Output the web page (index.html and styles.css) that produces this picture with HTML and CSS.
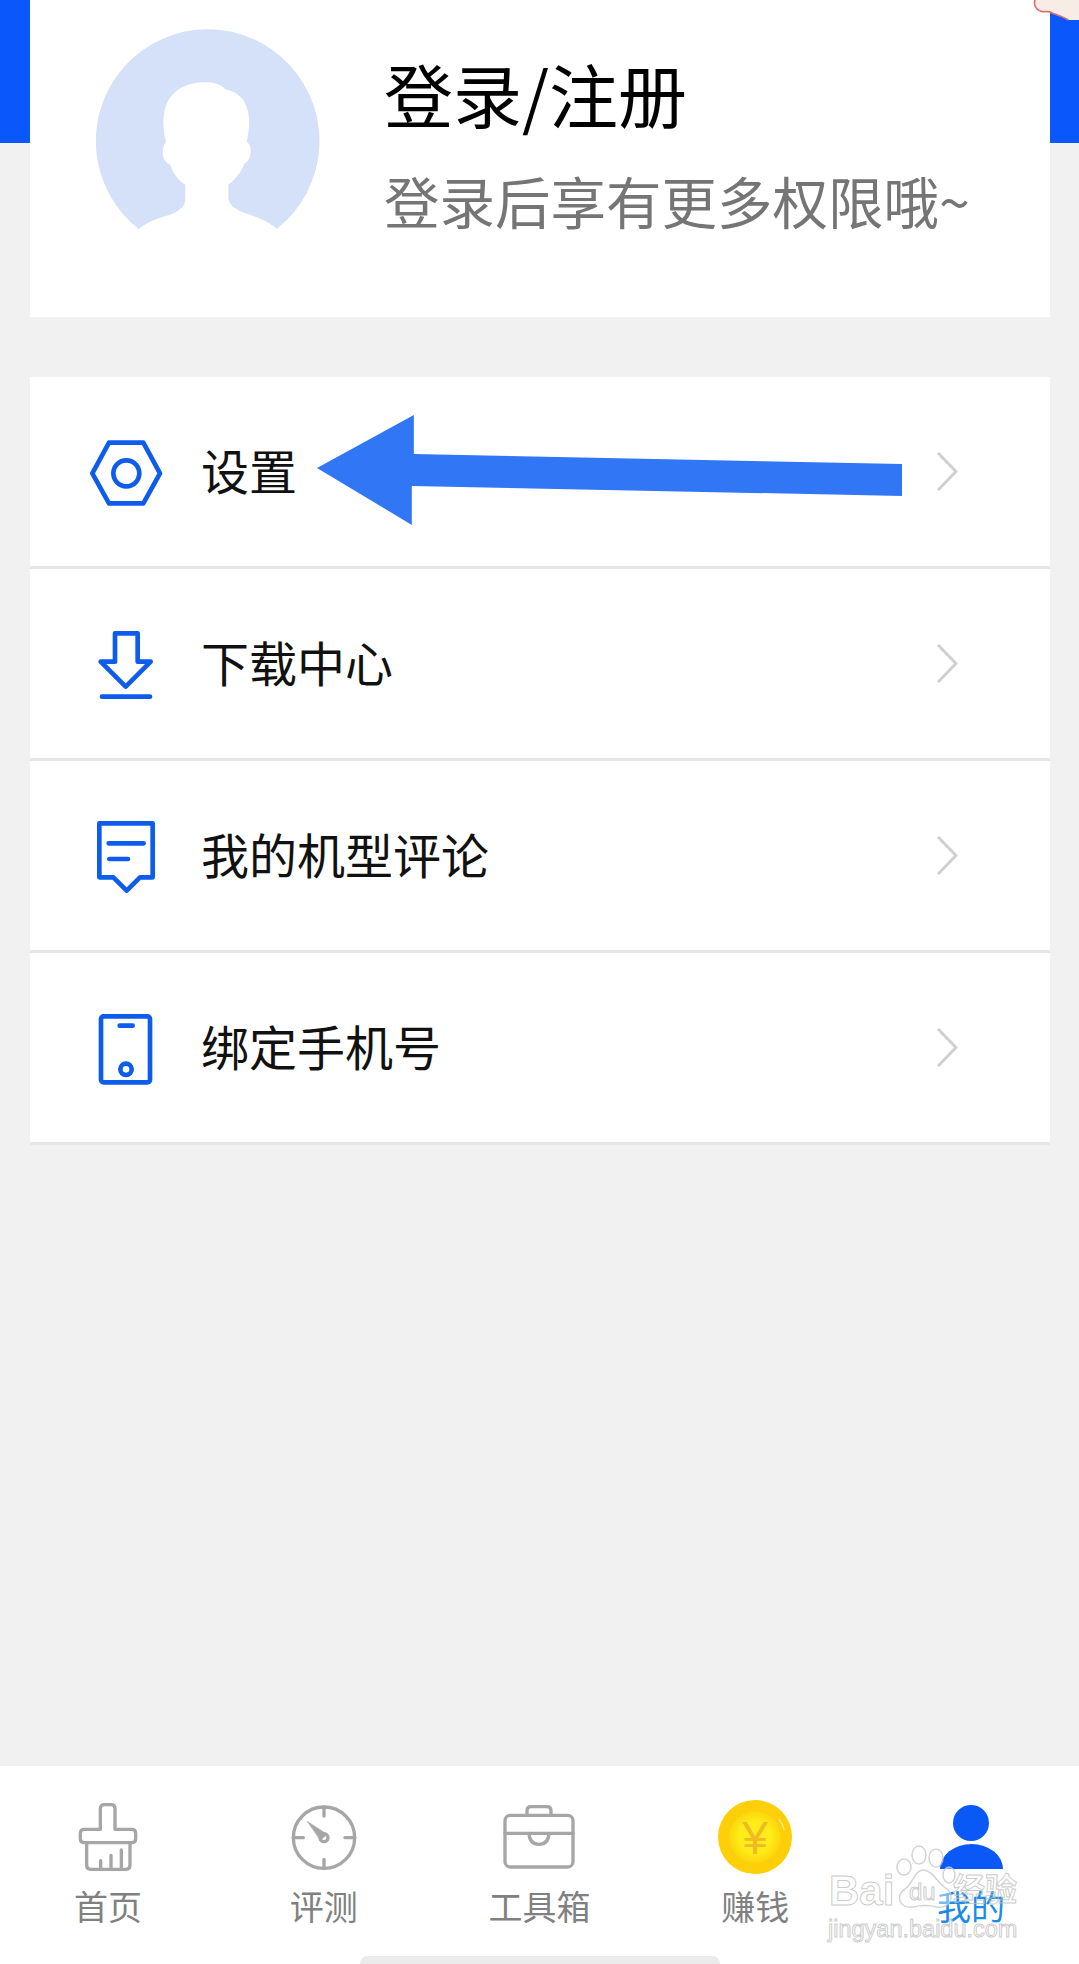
FILE: index.html
```html
<!DOCTYPE html>
<html lang="zh-CN">
<head>
  <meta charset="UTF-8" />
  <title>我的</title>
  <link rel="stylesheet" href="styles.css">
</head>
<body>

<div class="page">

  <svg class="sticker" viewBox="0 0 357 120">
    <path class="sticker-fill" d="M225 0 C220 15 228 32 250 35 C262 35 268 33 275 38 C290 45 310 50 325 60 H357 V0 Z" />
    <path class="sticker-line" d="M225 0 C220 15 228 32 250 35 C262 35 268 33 275 38 C290 45 310 50 325 60" />
  </svg>

  <div class="profile-wrap">
    <section class="profile">
      <svg class="avatar" viewBox="47 27 673 604">
        <path d="M175 628 A336 336 0 1 1 590 628 C560 600 520 590 490 578 C460 565 445 555 445 530 L445 495 C470 475 485 455 492 432 C508 425 513 405 512 390 C512 378 505 370 500 365 C510 320 510 280 495 250 C485 228 460 212 435 208 C425 192 395 187 375 187 C320 187 270 210 255 265 C245 300 250 335 257 368 C247 378 247 395 248 405 C250 420 258 430 270 435 C277 460 295 482 315 495 L315 540 C315 565 290 578 260 588 C225 598 200 608 175 628 Z" />
      </svg>
      <div class="profile-text">
        <h1>登录/注册</h1>
        <p>登录后享有更多权限哦~</p>
      </div>
    </section>
  </div>

  <main class="menu">
    <div class="row">
      <svg class="row-icon" viewBox="78 36 240 240">
        <path d="M97 160 L147 68 H250 L300 160 L250 250 H147 Z" />
        <circle cx="199" cy="160" r="39" />
      </svg>
      <span class="row-label">设置</span>
      <svg class="chevron" viewBox="0 0 21 39"><path d="M1 1 L19 19.500 L1 38" /></svg>
      <svg class="arrow" viewBox="0 0 586 110">
        <polygon points="0,53 97,0 97,39 586,49 586,81 95,71 95,110" />
      </svg>
    </div>
    <div class="row">
      <svg class="row-icon" viewBox="78 612 240 240">
        <path d="M165 640 H233 V725 H272 L197 800 L122 725 H165 Z" />
        <path d="M126 830 H270" />
      </svg>
      <span class="row-label">下载中心</span>
      <svg class="chevron" viewBox="0 0 21 39"><path d="M1 1 L19 19.500 L1 38" /></svg>
    </div>
    <div class="row">
      <svg class="row-icon" viewBox="78 78 240 240">
        <path d="M118 100 H278 V262 H240 L200 302 L160 262 H118 Z" />
        <path d="M146 160 H251 M148 207 H204" />
      </svg>
      <span class="row-label">我的机型评论</span>
      <svg class="chevron" viewBox="0 0 21 39"><path d="M1 1 L19 19.500 L1 38" /></svg>
    </div>
    <div class="row">
      <svg class="row-icon" viewBox="78 654 240 240">
        <rect x="123" y="679" width="147" height="198" rx="8" />
        <path d="M179 707 H218" />
        <circle cx="198" cy="838" r="17" />
      </svg>
      <span class="row-label">绑定手机号</span>
      <svg class="chevron" viewBox="0 0 21 39"><path d="M1 1 L19 19.500 L1 38" /></svg>
    </div>
  </main>

  <nav class="tabbar">
    <div class="tabs">
      <div class="tab">
        <svg class="tab-icon" viewBox="24 21 240 240">
          <path d="M121 118 V56 Q121 44 133 44 H153 Q165 44 165 56 V118 H215 Q227 118 227 130 V146 Q227 158 215 158 H73 Q61 158 61 146 V130 Q61 118 73 118 Z" />
          <path d="M80 158 V226 Q80 238 92 238 H198 Q210 238 210 226 V158" />
          <path d="M122 212 V238 M153 196 V238 M184 180 V238" />
        </svg>
        <span class="tab-label">首页</span>
      </div>
      <div class="tab">
        <svg class="tab-icon" viewBox="672 21 240 240">
          <circle cx="792" cy="143" r="92" />
          <path d="M792 51 V78 M792 208 V235 M700 143 H730 M855 143 H884" />
          <circle cx="792" cy="143" r="12" />
          <polygon class="needle" points="743,95 801,133 782,151" />
        </svg>
        <span class="tab-label">评测</span>
      </div>
      <div class="tab">
        <svg class="tab-icon" viewBox="30 21 240 240">
          <rect x="48" y="76" width="204" height="155" rx="16" />
          <path d="M114 76 V62 Q114 50 126 50 H174 Q186 50 186 62 V76" />
          <path d="M48 130 H252" />
          <path d="M120 130 Q122 163 150 163 Q178 163 180 130" />
        </svg>
        <span class="tab-label">工具箱</span>
      </div>
      <div class="tab">
        <svg class="coin" viewBox="0 0 80 80">
          <defs>
            <radialGradient id="coinFace">
              <stop offset="0.6" stop-color="#ffec18" />
              <stop offset="1" stop-color="#fbd60c" />
            </radialGradient>
          </defs>
          <circle class="coin-outer" cx="40" cy="40" r="37" />
          <circle class="coin-inner" cx="40" cy="40" r="26" fill="url(#coinFace)" />
          <path class="coin-shine" d="M64 22 Q68 27 69 33" />
          <text class="coin-mark" x="40" y="56.500" text-anchor="middle">¥</text>
        </svg>
        <span class="tab-label">赚钱</span>
      </div>
      <div class="tab">
        <svg class="person" viewBox="0 0 80 80">
          <circle cx="40" cy="26" r="18" />
          <path d="M9 72 A31.500 25 0 0 1 72 72 Z" />
        </svg>
        <span class="tab-label tab-label-active">我的</span>
      </div>
    </div>
    <div class="home-bar"></div>
  </nav>

  <!-- 水印 -->
  <div class="watermark">
    <svg class="paw" viewBox="0 0 70 66">
      <ellipse cx="11" cy="22" rx="7" ry="8" />
      <ellipse cx="26" cy="10" rx="7" ry="9" />
      <ellipse cx="43" cy="13" rx="7" ry="9" />
      <ellipse cx="56" cy="30" rx="6" ry="8" />
      <path d="M30 25 C40 25 44 38 54 44 C62 50 58 64 44 62 C36 60 28 60 20 62 C6 64 2 50 12 44 C20 38 22 25 30 25 Z" />
    </svg>
    <span class="wm-bai">Bai</span>
    <span class="wm-du">du</span>
    <span class="wm-jy">经验</span>
    <span class="wm-url">jingyan.baidu.com</span>
  </div>

</div>

</body>
</html>
```

FILE: styles.css
```css
* {
  box-sizing: border-box;
}
body {
  margin: 0;
  font-family: "Noto Sans CJK SC", "Liberation Sans", sans-serif;
  background: #f1f1f1;
}
.page {
  position: relative;
  width: 1079px;
  height: 1964px;
  display: flex;
  flex-direction: column;
  overflow: hidden;
}

/* top */
.profile-wrap {
  padding: 0 29px 0 30px;
  background: linear-gradient(#0a57fb 143px, transparent 143px);
}
.profile {
  height: 317px;
  padding: 29px 0 0 66px;
  background: white;
  display: flex;
  align-items: flex-start;
  gap: 64px;
}
.avatar {
  width: 224px;
  height: 201px;
  fill: #d4e1f9;
}
.profile-text {
  display: flex;
  flex-direction: column;
}
h1 {
  margin: 19px 0 0;
  font-size: 69px;
  line-height: 90px;
  font-weight: 400;
  color: #000;
}
p {
  margin: 27px 0 0;
  font-size: 55.500px;
  line-height: 70px;
  color: #757575;
}
.sticker {
  position: absolute;
  top: 0;
  right: 0;
  width: 119px;
  height: 40px;
}
.sticker-fill {
  fill: #f8ece6;
}
.sticker-line {
  fill: none;
  stroke: #e07070;
  stroke-width: 5;
}

/* menu */
.menu {
  flex: 1;
  margin-top: 60px;
  padding: 0 29px 0 30px;
}
.row {
  position: relative;
  height: 192px;
  padding: 0 92px 0 56px;
  background: white;
  border-bottom: 3px solid #e6e6e6;
  display: flex;
  align-items: center;
}
.row-icon {
  width: 80px;
  height: 80px;
  fill: none;
  stroke: #0d5cec;
  stroke-width: 14;
  stroke-linejoin: round;
  stroke-linecap: round;
}
.row-label {
  margin-left: 35px;
  padding-bottom: 5px;
  font-size: 48px;
  color: #111;
}
.chevron {
  width: 21px;
  height: 39px;
  margin-left: auto;
  fill: none;
  stroke: #cfcfcf;
  stroke-width: 3;
}
.arrow {
  position: absolute;
  left: 287px;
  top: 38px;
  width: 585px;
  height: 110px;
  fill: #3176f4;
}

/* tabs */
.tabbar {
  height: 198px;
  padding-top: 31px;
  background: white;
  display: flex;
  flex-direction: column;
}
.tabs {
  display: grid;
  grid-template-columns: repeat(5, 1fr);
}
.tab {
  display: flex;
  flex-direction: column;
  align-items: center;
}
.tab-icon {
  width: 80px;
  height: 80px;
  fill: none;
  stroke: #a6a6a6;
  stroke-width: 10;
  stroke-linejoin: round;
  stroke-linecap: round;
}
.needle {
  fill: #a6a6a6;
  stroke-width: 2;
}
.coin,
.person {
  width: 80px;
  height: 80px;
}
.coin-outer {
  fill: #fdcf08;
}
.coin-shine {
  fill: none;
  stroke: #ffe98a;
  stroke-width: 1.500;
}
.coin-mark {
  font-family: "Liberation Sans", sans-serif;
  font-size: 46px;
  fill: #efba25;
}
.person {
  fill: #0a58f5;
}
.tab-label {
  margin-top: 9px;
  font-size: 34px;
  line-height: 40px;
  color: #808080;
}
.tab-label-active {
  color: #1a8ce8;
}
.home-bar {
  width: 360px;
  height: 8px;
  margin-top: auto;
  align-self: center;
  background: #ebebeb;
  border-radius: 8px 8px 0 0;
}

/* watermark */
.watermark {
  position: absolute;
  left: 825px;
  top: 1845px;
  width: 200px;
  height: 100px;
  color: transparent;
  font-family: "Liberation Sans", sans-serif;
  -webkit-text-stroke: 1px rgba(190, 190, 190, 0.8);
}
.paw {
  position: absolute;
  left: 68px;
  top: 0;
  width: 70px;
  height: 66px;
  fill: rgba(255, 255, 255, 0.4);
  stroke: rgba(200, 200, 200, 0.8);
  stroke-width: 1.5;
}
.wm-bai {
  position: absolute;
  left: 4px;
  top: 26px;
  font-size: 42px;
  line-height: 40px;
  font-weight: 700;
}
.wm-du {
  position: absolute;
  left: 84px;
  top: 33px;
  font-size: 24px;
  line-height: 28px;
}
.wm-jy {
  position: absolute;
  left: 128px;
  top: 20px;
  font-family: "Noto Sans CJK SC", sans-serif;
  font-size: 32px;
  line-height: 44px;
  font-weight: 700;
}
.wm-url {
  position: absolute;
  left: 3px;
  top: 68px;
  font-size: 23.500px;
  line-height: 32px;
  white-space: nowrap;
}
```
